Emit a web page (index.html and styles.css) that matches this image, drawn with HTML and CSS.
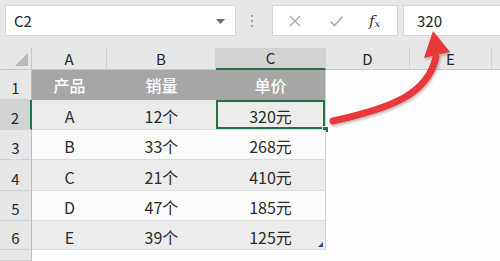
FILE: index.html
```html
<!DOCTYPE html>
<html lang="zh">
<head>
<meta charset="utf-8">
<link rel="stylesheet" href="styles.css">
</head>
<body>
<div class="app">
  <div class="fbar">
    <div class="namebox">
      <span class="name">C2</span>
      <svg class="dd" width="9" height="5" viewBox="0 0 9 5"><polygon points="0,0 9,0 4.5,5" fill="#6b6b6b"/></svg>
    </div>
    <div class="sep"><span></span><span></span><span></span></div>
    <div class="fbtns">
      <svg class="btn" width="14" height="14" viewBox="0 0 14 14"><path d="M2 2 L12 12 M12 2 L2 12" stroke="#a8a8a8" stroke-width="1.4" fill="none"/></svg>
      <svg class="btn" width="15" height="14" viewBox="0 0 15 14"><path d="M1.5 7.5 L5.5 11.5 L13.5 2.5" stroke="#a8a8a8" stroke-width="1.6" fill="none"/></svg>
      <span class="fx">f<sub>x</sub></span>
    </div>
    <div class="finput">320</div>
  </div>
  <div class="sheet">
    <div class="corner"><svg width="13" height="13" viewBox="0 0 13 13"><polygon points="0,13 13,0 13,13" fill="#b9b9b9"/></svg></div>
    <div class="ch">A</div>
    <div class="ch">B</div>
    <div class="ch sel">C</div>
    <div class="ch">D</div>
    <div class="ch">E</div>
    <div class="ch last"></div>

    <div class="rh">1</div>
    <div class="c th">产品</div>
    <div class="c th">销量</div>
    <div class="c th cc">单价</div>
    <div class="e"></div><div class="e"></div><div class="e"></div>

    <div class="rh rsel">2</div>
    <div class="c g">A</div>
    <div class="c g">12个</div>
    <div class="c g cc active">320元<span class="handle"></span></div>
    <div class="e"></div><div class="e"></div><div class="e"></div>

    <div class="rh">3</div>
    <div class="c w">B</div>
    <div class="c w">33个</div>
    <div class="c w cc">268元</div>
    <div class="e"></div><div class="e"></div><div class="e"></div>

    <div class="rh">4</div>
    <div class="c g">C</div>
    <div class="c g">21个</div>
    <div class="c g cc">410元</div>
    <div class="e"></div><div class="e"></div><div class="e"></div>

    <div class="rh">5</div>
    <div class="c w">D</div>
    <div class="c w">47个</div>
    <div class="c w cc">185元</div>
    <div class="e"></div><div class="e"></div><div class="e"></div>

    <div class="rh">6</div>
    <div class="c g">E</div>
    <div class="c g">39个</div>
    <div class="c g cc">125元<span class="resize"></span></div>
    <div class="e"></div><div class="e"></div><div class="e"></div>

    <div class="rh"></div>
    <div class="e"></div><div class="e"></div><div class="e"></div>
    <div class="e"></div><div class="e"></div><div class="e"></div>
  </div>
  <svg class="arrow" width="500" height="261" viewBox="0 0 500 261">
    <defs>
      <filter id="sh" x="-20%" y="-20%" width="140%" height="140%">
        <feDropShadow dx="1" dy="2" stdDeviation="1.2" flood-color="#000" flood-opacity="0.25"/>
      </filter>
    </defs>
    <g filter="url(#sh)">
      <path d="M333 121 C 392 108, 428 94, 436 57" stroke="#e8393b" stroke-width="7" stroke-linecap="round" fill="none"/>
      <polygon points="433,31 424,58 450,52" fill="#e8393b"/>
    </g>
  </svg>
</div>
</body>
</html>
```
FILE: styles.css
```css
* { box-sizing: border-box; }
html, body {
  margin: 0;
  padding: 0;
  width: 500px;
  height: 261px;
  overflow: hidden;
  background: #ffffff;
  font-family: "Noto Sans CJK SC", "Noto Sans", sans-serif;
}
.app {
  position: relative;
  width: 500px;
  height: 261px;
  display: flex;
  flex-direction: column;
}
.fbar {
  height: 48px;
  flex: none;
  background: #e7e7e7;
  display: flex;
  align-items: flex-start;
  padding: 5px 0 0 5px;
}
.namebox {
  width: 231px;
  height: 31px;
  background: #fff;
  border: 1px solid #d6d6d6;
  display: flex;
  align-items: center;
  justify-content: space-between;
  padding: 0 10px 0 8px;
  font-size: 15px;
  color: #222;
}
.dd { margin-top: 1px; }
.sep {
  width: 36px;
  height: 31px;
  display: flex;
  flex-direction: column;
  align-items: flex-start;
  justify-content: center;
  gap: 3px;
  padding-left: 15px;
}
.sep span {
  width: 2px;
  height: 2px;
  background: #8d8d8d;
  border-radius: 1px;
}
.fbtns {
  width: 126px;
  height: 31px;
  background: #fff;
  border: 1px solid #d6d6d6;
  display: flex;
  align-items: center;
  padding-left: 15px;
  gap: 27px;
}
.fx {
  font-family: "DejaVu Serif", "Liberation Serif", serif;
  font-style: italic;
  font-size: 15px;
  color: #333;
  margin-left: -2px;
}
.fx sub {
  font-size: 10px;
  vertical-align: -1px;
}
.finput {
  margin-left: 5px;
  flex: 1;
  height: 31px;
  background: #fff;
  border: 1px solid #d6d6d6;
  border-right: none;
  display: flex;
  align-items: center;
  padding-left: 13px;
  font-size: 15px;
  color: #222;
}
.sheet {
  flex: 1;
  display: grid;
  grid-template-columns: 32px 75px 109px 110px 84px 82px 1fr;
  grid-template-rows: 22px 30px 30px 30px 31px 30px 29px 1fr;
  background: #fff;
}
.corner {
  background: #e7e7e7;
  border-right: 1px solid #c9c9c9;
  border-bottom: 1px solid #c9c9c9;
  display: flex;
  align-items: flex-end;
  justify-content: flex-end;
  padding: 0 3px 3px 0;
}
.ch {
  background: #e7e7e7;
  border-right: 1px solid #d2d2d2;
  border-bottom: 1px solid #c9c9c9;
  display: flex;
  align-items: flex-end;
  justify-content: center;
  font-size: 15px;
  color: #262626;
  padding-bottom: 0;
  line-height: 20px;
}
.ch.sel {
  background: #d3d3d3;
  border-bottom: 2px solid #217346;
}
.ch.last { border-right: none; }
.rh {
  background: #e7e7e7;
  border-right: 1px solid #bdbdbd;
  border-bottom: 1px solid #d0d0d0;
  display: flex;
  align-items: flex-end;
  justify-content: center;
  font-size: 15px;
  color: #262626;
  padding-bottom: 1px;
  line-height: 20px;
}
.rh.rsel {
  background: #d3d3d3;
  border-right: 2px solid #217346;
}
.c {
  position: relative;
  display: flex;
  align-items: center;
  justify-content: center;
  font-size: 16px;
  color: #2b2b2b;
  padding-top: 3px;
  border-bottom: 1px solid #dcdcdc;
}
.c.th {
  background: #a6a6a6;
  color: #fff;
  font-weight: 500;
  border-bottom: none;
  padding-top: 0;
}
.c.g { background: #ececec; }
.c.w { background: #fbfbfb; }
.c.cc { border-right: 1px solid #d2d2d2; }
.c.active {
  box-shadow: inset 0 0 0 2px #217346;
}
.handle {
  position: absolute;
  right: -4px;
  bottom: -4px;
  width: 7px;
  height: 7px;
  background: #217346;
  border: 1px solid #fff;
}
.resize {
  position: absolute;
  right: 2px;
  bottom: 2px;
  width: 0;
  height: 0;
  border-left: 5px solid transparent;
  border-bottom: 5px solid #2b4f9e;
}
.e { background: #fdfdfd; }
.arrow {
  position: absolute;
  left: 0;
  top: 0;
  pointer-events: none;
}
```
